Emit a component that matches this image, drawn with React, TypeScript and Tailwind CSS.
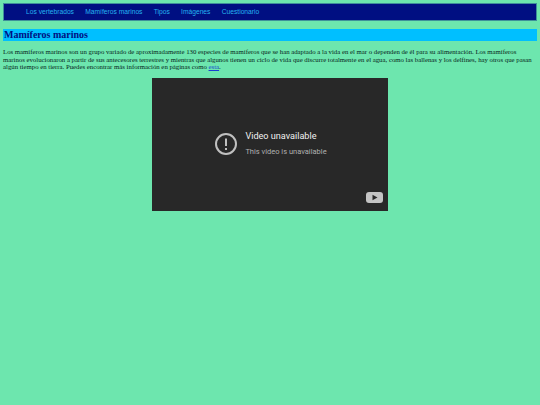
export default function App() {
  const links = ["Los vertebrados", "Mamíferos marinos", "Tipos", "Imágenes", "Cuestionario"];
  return (
    <div className="min-h-[405px] bg-[#6de6ae] px-[3px] pt-[3px] font-['Liberation_Serif',serif] text-black">
      <nav className="flex h-[18px] items-center gap-[11.25px] border border-[#3f8f9a] bg-[#000f82] pl-[22px] font-['Liberation_Sans',sans-serif] text-[6.7px] text-[#25b4f0]">
        {links.map((l) => (
          <a key={l} className="whitespace-nowrap">{l}</a>
        ))}
      </nav>
      <h2 className="mt-[8px] h-[12px] bg-[#00bfff] pl-px text-[10px] font-bold leading-[12px] text-[#000f82]">
        Mamíferos marinos
      </h2>
      <p className="mt-[7px] text-[6.78px] leading-[7.6px] text-[#06241a]">
        Los mamíferos marinos son un grupo variado de aproximadamente 130 especies de mamíferos que se han adaptado a la vida en el mar o dependen de él para su alimentación. Los mamíferos marinos evolucionaron a partir de sus antecesores terrestres y mientras que algunos tienen un ciclo de vida que discurre totalmente en el agua, como las ballenas y los delfines, hay otros que pasan algún tiempo en tierra. Puedes encontrar más información en páginas como <a className="text-[#1a3fd0] underline">esta</a>.
      </p>
      <div className="relative mx-auto mt-[7px] flex h-[133px] w-[236px] items-center justify-center bg-[#282828] font-['Roboto',sans-serif]">
        <div className="flex items-center gap-[7px] pl-[1px]">
          <svg width="24" height="24" viewBox="0 0 24 24" fill="none" stroke="#c0c0c0" strokeWidth="2">
            <circle cx="12" cy="12" r="10" />
            <path d="M12 6.5v7.5M12 16v2" />
          </svg>
          <div className="-translate-y-px">
            <div className="text-[9.1px] font-normal leading-[12px] text-[#f0f0f0]">Video unavailable</div>
            <div className="mt-[5px] text-[7.5px] leading-[10px] text-[#b0b0b0]">This video is unavailable</div>
          </div>
        </div>
        <svg className="absolute bottom-[8px] right-[5px]" width="17" height="11" viewBox="0 0 17 11">
          <rect width="17" height="11" rx="3" fill="#c4c4c4" />
          <path d="M6.5 2.8v5.4L11.5 5.5z" fill="#282828" />
        </svg>
      </div>
    </div>
  );
}
